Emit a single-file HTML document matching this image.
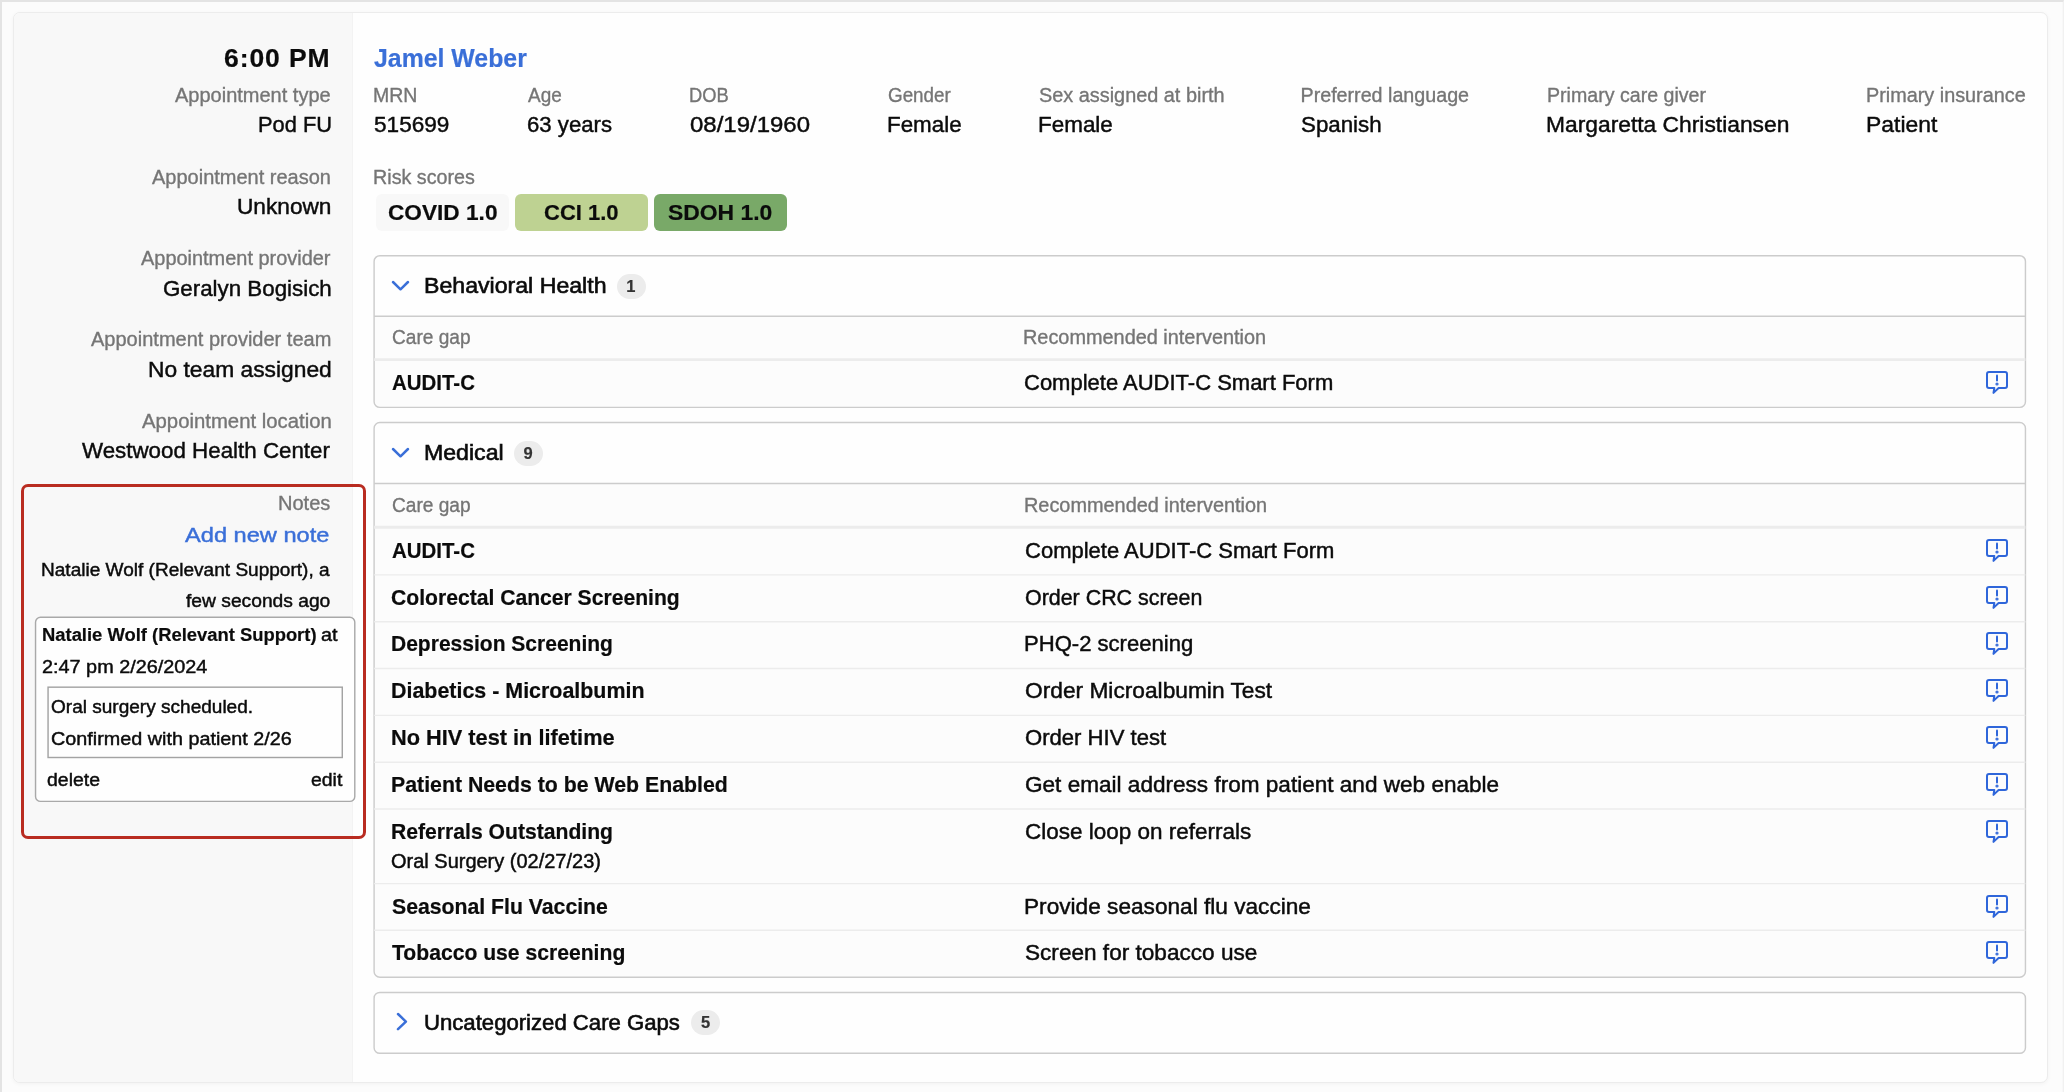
<!DOCTYPE html>
<html lang="en">
<head>
<meta charset="utf-8">
<title>Pre-visit planning – Jamel Weber</title>
<style>
html,body{margin:0;padding:0}
body{width:2064px;height:1092px;overflow:hidden;background:#fcfcfc;font-family:"Liberation Sans",sans-serif;color:#0b0b0b}
.page,.card,.side,.main,.fld,.demo,.risk,.badge,.panel,.phead,.pill,.tbl,.thead,.tr,.notes,.note,.ta,.t,.chev,.ico{position:absolute;box-sizing:border-box;margin:0;padding:0}
.page{border-top:2px solid #e4e4e4;border-left:2px solid #e4e4e4;border-right:1px solid #f1f1f1;box-shadow:inset -1px 0 0 #f8f8f8;background:#fcfcfc;overflow:hidden}
.card{background:#fefefe;border:1px solid #ececec;border-radius:7px;box-shadow:0 1px 4px rgba(0,0,0,.045)}
.side{background:#f8f8f8;border-radius:6px 0 0 6px;border-right:1px solid #f3f3f3}
.t{white-space:pre;transform-origin:0 0;font-weight:400;text-decoration:none;display:block;-webkit-text-stroke:.45px currentColor}
.t.lbl{-webkit-text-stroke-width:.35px}
.t.b{font-weight:700;-webkit-text-stroke-width:.2px}
.page{will-change:transform}
.badge{border-radius:6px}
.panel{border-radius:6px;background:#fefefe}
.lines{position:absolute;overflow:visible}
.pill{background:#ececec;border-radius:13px}
.tbl{background:#fcfcfc;border-radius:0 0 6px 6px}
.notes{border:3px solid #b92c21;border-radius:7px}
.note{background:#fefefe;border-radius:6px}
.ta{background:#fefefe}
</style>
</head>
<body>
<div class="page" style="left:0px;top:0px;width:2064px;height:1092px;">
 <div class="card" style="left:11px;top:10px;width:2035px;height:1071px;">
  <aside class="side" style="left:0px;top:0px;width:339px;height:1069px;">
   <span class="t time b" style="left:210.43px;top:28px;font-size:25.8px;line-height:34px;transform:scaleX(1.0269);letter-spacing:0.9px;">6:00 PM</span>
   <div class="fld" style="left:0px;top:69px;width:339px;height:56px;">
    <span class="t lbl" style="left:161.05px;top:0px;font-size:19.7px;line-height:26px;color:#757575;transform:scaleX(1.0157);">Appointment type</span>
    <span class="t val" style="left:243.73px;top:27px;font-size:22.9px;line-height:30px;transform:scaleX(0.9535);">Pod FU</span>
   </div>
   <div class="fld" style="left:0px;top:151px;width:339px;height:56px;">
    <span class="t lbl" style="left:138.25px;top:0px;font-size:19.7px;line-height:26px;color:#757575;transform:scaleX(1.0154);">Appointment reason</span>
    <span class="t val" style="left:222.92px;top:27px;font-size:22.9px;line-height:30px;transform:scaleX(0.9898);">Unknown</span>
   </div>
   <div class="fld" style="left:0px;top:232px;width:339px;height:56px;">
    <span class="t lbl" style="left:126.85px;top:0px;font-size:19.7px;line-height:26px;color:#757575;transform:scaleX(1.0126);">Appointment provider</span>
    <span class="t val" style="left:148.72px;top:28px;font-size:22.9px;line-height:30px;transform:scaleX(0.9751);">Geralyn Bogisich</span>
   </div>
   <div class="fld" style="left:0px;top:313px;width:339px;height:56px;">
    <span class="t lbl" style="left:76.75px;top:0px;font-size:19.7px;line-height:26px;color:#757575;transform:scaleX(1.0168);">Appointment provider team</span>
    <span class="t val" style="left:133.66px;top:28px;font-size:22.9px;line-height:30px;transform:scaleX(0.9961);">No team assigned</span>
   </div>
   <div class="fld" style="left:0px;top:395px;width:339px;height:56px;">
    <span class="t lbl" style="left:127.56px;top:0px;font-size:19.7px;line-height:26px;color:#757575;transform:scaleX(1.0322);">Appointment location</span>
    <span class="t val" style="left:68.3px;top:27px;font-size:22.9px;line-height:30px;transform:scaleX(0.9760);">Westwood Health Center</span>
   </div>
  </aside>
  <main class="main" style="left:339px;top:0px;width:1694px;height:1069px;">
   <a class="t name b" style="left:20.75px;top:29px;font-size:25.2px;line-height:33px;color:#3a6fd8;transform:scaleX(0.9864);">Jamel Weber</a>
   <div class="demo" style="left:21px;top:67px;width:1652px;height:60px;">
    <div class="fld" style="left:-0.4px;top:0px;width:76.2px;height:60px;">
     <span class="t lbl" style="left:-0.49px;top:2px;font-size:19.7px;line-height:26px;color:#757575;transform:scaleX(0.9905);">MRN</span>
     <span class="t val" style="left:0.66px;top:29px;font-size:22.9px;line-height:30px;transform:scaleX(0.9873);">515699</span>
    </div>
    <div class="fld" style="left:152.6px;top:0px;width:85.9px;height:60px;">
     <span class="t lbl" style="left:1.24px;top:2px;font-size:19.7px;line-height:26px;color:#757575;transform:scaleX(0.9640);">Age</span>
     <span class="t val" style="left:0.43px;top:29px;font-size:22.9px;line-height:30px;transform:scaleX(0.9681);">63 years</span>
    </div>
    <div class="fld" style="left:315.8px;top:0px;width:120.6px;height:60px;">
     <span class="t lbl" style="left:-0.39px;top:2px;font-size:19.7px;line-height:26px;color:#757575;transform:scaleX(0.9292);">DOB</span>
     <span class="t val" style="left:0.21px;top:29px;font-size:22.9px;line-height:30px;transform:scaleX(1.0472);">08/19/1960</span>
    </div>
    <div class="fld" style="left:513.4px;top:0px;width:74.3px;height:60px;">
     <span class="t lbl" style="left:0.28px;top:2px;font-size:19.7px;line-height:26px;color:#757575;transform:scaleX(0.9560);">Gender</span>
     <span class="t val" style="left:-0.51px;top:29px;font-size:22.9px;line-height:30px;transform:scaleX(0.9776);">Female</span>
    </div>
    <div class="fld" style="left:664.5px;top:0px;width:185.7px;height:60px;">
     <span class="t lbl" style="left:0.24px;top:2px;font-size:19.7px;line-height:26px;color:#757575;transform:scaleX(1.0093);">Sex assigned at birth</span>
     <span class="t val" style="left:-0.52px;top:29px;font-size:22.9px;line-height:30px;transform:scaleX(0.9803);">Female</span>
    </div>
    <div class="fld" style="left:927px;top:0px;width:168.3px;height:60px;">
     <span class="t lbl" style="left:-0.5px;top:2px;font-size:19.7px;line-height:26px;color:#757575;">Preferred language</span>
     <span class="t val" style="left:0.27px;top:29px;font-size:22.9px;line-height:30px;transform:scaleX(0.9746);">Spanish</span>
    </div>
    <div class="fld" style="left:1173px;top:0px;width:242.3px;height:60px;">
     <span class="t lbl" style="left:-0.49px;top:2px;font-size:19.7px;line-height:26px;color:#757575;transform:scaleX(0.9953);">Primary care giver</span>
     <span class="t val" style="left:-0.74px;top:29px;font-size:22.9px;line-height:30px;transform:scaleX(0.9961);">Margaretta Christiansen</span>
    </div>
    <div class="fld" style="left:1492.6px;top:0px;width:159.5px;height:60px;">
     <span class="t lbl" style="left:-0.51px;top:2px;font-size:19.7px;line-height:26px;color:#757575;transform:scaleX(1.0064);">Primary insurance</span>
     <span class="t val" style="left:-0.55px;top:29px;font-size:22.9px;line-height:30px;">Patient</span>
    </div>
   </div>
   <div class="risk" style="left:21px;top:149px;width:420px;height:72px;">
    <span class="t lbl" style="left:-0.9px;top:2px;font-size:19.7px;line-height:26px;color:#757575;">Risk scores</span>
    <span class="badge" style="left:2px;top:32px;width:133px;height:37.4px;background:#f8f8f8;">
     <span class="t b" style="left:12.21px;top:5px;font-size:21.4px;line-height:28px;transform:scaleX(1.0588);">COVID 1.0</span>
    </span>
    <span class="badge" style="left:140.6px;top:32px;width:133.6px;height:37.4px;background:#bed292;">
     <span class="t b" style="left:29.63px;top:5px;font-size:21.4px;line-height:28px;transform:scaleX(1.0282);">CCI 1.0</span>
    </span>
    <span class="badge" style="left:279.9px;top:32px;width:132.9px;height:37.4px;background:#79a968;">
     <span class="t b" style="left:13.76px;top:5px;font-size:21.4px;line-height:28px;transform:scaleX(1.0701);">SDOH 1.0</span>
    </span>
   </div>
   <section class="panel" style="left:21px;top:242px;width:1652px;height:153px;">
    <header class="phead" style="left:0px;top:0px;width:1652px;height:61px;">
     <svg class="chev" style="left:17.4px;top:25.4px" width="19" height="12" viewBox="0 0 19 12"><path d="M2 2 L9.5 9.3 L17 2" fill="none" stroke="#3a6fd8" stroke-width="2.5" stroke-linecap="round" stroke-linejoin="round"/></svg>
     <h2 class="t ptitle" style="left:49.69px;top:17px;font-size:21.6px;line-height:28px;transform:scaleX(1.0708);-webkit-text-stroke:0.6px currentColor;">Behavioral Health</h2>
     <span class="pill" style="left:243.2px;top:19px;width:28.7px;height:25px;">
      <span class="t b" style="left:9.15px;top:2px;font-size:16.5px;line-height:21px;color:#333;">1</span>
     </span>
    </header>
    <div class="tbl" style="left:0px;top:61px;width:1652px;height:92px;">
     <div class="thead" style="left:0px;top:0px;width:1652px;height:44px;">
      <span class="t lbl" style="left:17.67px;top:8px;font-size:19.7px;line-height:26px;color:#757575;transform:scaleX(0.9698);">Care gap</span>
      <span class="t lbl" style="left:648.79px;top:8px;font-size:19.7px;line-height:26px;color:#757575;transform:scaleX(1.0099);">Recommended intervention</span>
     </div>
     <div class="tr" style="left:0px;top:44px;width:1652px;height:48px;">
      <span class="t gap b" style="left:17.72px;top:9px;font-size:21.5px;line-height:28px;transform:scaleX(0.9507);">AUDIT-C</span>
      <span class="t rec" style="left:649.83px;top:9px;font-size:21.5px;line-height:28px;transform:scaleX(1.0231);">Complete AUDIT-C Smart Form</span>
      <svg class="ico" style="left:1611px;top:10px" width="24" height="24" viewBox="0 0 24 24" fill="none" stroke="#2f66da" stroke-width="2" stroke-linejoin="round" stroke-linecap="round"><path d="M4 2 H20 Q22 2 22 4 V16 Q22 18 20 18 H13.6 L8.5 22.9 L9.3 18 H4 Q2 18 2 16 V4 Q2 2 4 2 Z"/><path d="M12 5.5 V10.4"/><circle cx="12" cy="14" r="0.6" fill="#2f66da"/></svg>
     </div>
    </div>
    <svg class="lines" style="left:-2px;top:-2px" width="1656" height="157" viewBox="372 253 1656 157" fill="none"><rect x="374.1" y="255.7" width="1651.35" height="151.7" rx="5.7" fill="none" stroke="#cccccc" stroke-width="1.43"/><path d="M374.1 359.6H2025.45" stroke="#ececec" stroke-width="2.86"/><path d="M374.1 316.2H2025.45" stroke="#cccccc" stroke-width="1.43"/></svg>
   </section>
   <section class="panel" style="left:21px;top:409px;width:1652px;height:556px;">
    <header class="phead" style="left:0px;top:0px;width:1652px;height:62px;">
     <svg class="chev" style="left:17.4px;top:25.4px" width="19" height="12" viewBox="0 0 19 12"><path d="M2 2 L9.5 9.3 L17 2" fill="none" stroke="#3a6fd8" stroke-width="2.5" stroke-linecap="round" stroke-linejoin="round"/></svg>
     <h2 class="t ptitle" style="left:49.69px;top:17px;font-size:21.6px;line-height:28px;transform:scaleX(1.0704);-webkit-text-stroke:0.6px currentColor;">Medical</h2>
     <span class="pill" style="left:140px;top:19px;width:28.6px;height:25px;">
      <span class="t b" style="left:9.6px;top:2px;font-size:16.5px;line-height:21px;color:#333;">9</span>
     </span>
    </header>
    <div class="tbl" style="left:0px;top:62px;width:1652px;height:494px;">
     <div class="thead" style="left:0px;top:0px;width:1652px;height:43px;">
      <span class="t lbl" style="left:17.67px;top:8px;font-size:19.7px;line-height:26px;color:#757575;transform:scaleX(0.9698);">Care gap</span>
      <span class="t lbl" style="left:649.89px;top:8px;font-size:19.7px;line-height:26px;color:#757575;transform:scaleX(1.0099);">Recommended intervention</span>
     </div>
     <div class="tr" style="left:0px;top:43px;width:1652px;height:48px;">
      <span class="t gap b" style="left:17.72px;top:10px;font-size:21.5px;line-height:28px;transform:scaleX(0.9507);">AUDIT-C</span>
      <span class="t rec" style="left:650.93px;top:10px;font-size:21.5px;line-height:28px;transform:scaleX(1.0235);">Complete AUDIT-C Smart Form</span>
      <svg class="ico" style="left:1611px;top:11px" width="24" height="24" viewBox="0 0 24 24" fill="none" stroke="#2f66da" stroke-width="2" stroke-linejoin="round" stroke-linecap="round"><path d="M4 2 H20 Q22 2 22 4 V16 Q22 18 20 18 H13.6 L8.5 22.9 L9.3 18 H4 Q2 18 2 16 V4 Q2 2 4 2 Z"/><path d="M12 5.5 V10.4"/><circle cx="12" cy="14" r="0.6" fill="#2f66da"/></svg>
     </div>
     <div class="tr" style="left:0px;top:91px;width:1652px;height:47px;">
      <span class="t gap b" style="left:17.46px;top:9px;font-size:21.5px;line-height:28px;transform:scaleX(0.9823);">Colorectal Cancer Screening</span>
      <span class="t rec" style="left:650.95px;top:9px;font-size:21.5px;line-height:28px;transform:scaleX(0.9960);">Order CRC screen</span>
      <svg class="ico" style="left:1611px;top:10px" width="24" height="24" viewBox="0 0 24 24" fill="none" stroke="#2f66da" stroke-width="2" stroke-linejoin="round" stroke-linecap="round"><path d="M4 2 H20 Q22 2 22 4 V16 Q22 18 20 18 H13.6 L8.5 22.9 L9.3 18 H4 Q2 18 2 16 V4 Q2 2 4 2 Z"/><path d="M12 5.5 V10.4"/><circle cx="12" cy="14" r="0.6" fill="#2f66da"/></svg>
     </div>
     <div class="tr" style="left:0px;top:138px;width:1652px;height:46px;">
      <span class="t gap b" style="left:16.98px;top:8px;font-size:21.5px;line-height:28px;transform:scaleX(0.9777);">Depression Screening</span>
      <span class="t rec" style="left:650.16px;top:8px;font-size:21.5px;line-height:28px;transform:scaleX(1.0262);">PHQ-2 screening</span>
      <svg class="ico" style="left:1611px;top:9px" width="24" height="24" viewBox="0 0 24 24" fill="none" stroke="#2f66da" stroke-width="2" stroke-linejoin="round" stroke-linecap="round"><path d="M4 2 H20 Q22 2 22 4 V16 Q22 18 20 18 H13.6 L8.5 22.9 L9.3 18 H4 Q2 18 2 16 V4 Q2 2 4 2 Z"/><path d="M12 5.5 V10.4"/><circle cx="12" cy="14" r="0.6" fill="#2f66da"/></svg>
     </div>
     <div class="tr" style="left:0px;top:184px;width:1652px;height:47px;">
      <span class="t gap b" style="left:16.95px;top:9px;font-size:21.5px;line-height:28px;transform:scaleX(0.9964);">Diabetics - Microalbumin</span>
      <span class="t rec" style="left:650.91px;top:9px;font-size:21.5px;line-height:28px;transform:scaleX(1.0571);">Order Microalbumin Test</span>
      <svg class="ico" style="left:1611px;top:10px" width="24" height="24" viewBox="0 0 24 24" fill="none" stroke="#2f66da" stroke-width="2" stroke-linejoin="round" stroke-linecap="round"><path d="M4 2 H20 Q22 2 22 4 V16 Q22 18 20 18 H13.6 L8.5 22.9 L9.3 18 H4 Q2 18 2 16 V4 Q2 2 4 2 Z"/><path d="M12 5.5 V10.4"/><circle cx="12" cy="14" r="0.6" fill="#2f66da"/></svg>
     </div>
     <div class="tr" style="left:0px;top:231px;width:1652px;height:47px;">
      <span class="t gap b" style="left:16.94px;top:9px;font-size:21.5px;line-height:28px;transform:scaleX(1.0116);">No HIV test in lifetime</span>
      <span class="t rec" style="left:650.93px;top:9px;font-size:21.5px;line-height:28px;transform:scaleX(1.0274);">Order HIV test</span>
      <svg class="ico" style="left:1611px;top:10px" width="24" height="24" viewBox="0 0 24 24" fill="none" stroke="#2f66da" stroke-width="2" stroke-linejoin="round" stroke-linecap="round"><path d="M4 2 H20 Q22 2 22 4 V16 Q22 18 20 18 H13.6 L8.5 22.9 L9.3 18 H4 Q2 18 2 16 V4 Q2 2 4 2 Z"/><path d="M12 5.5 V10.4"/><circle cx="12" cy="14" r="0.6" fill="#2f66da"/></svg>
     </div>
     <div class="tr" style="left:0px;top:278px;width:1652px;height:47px;">
      <span class="t gap b" style="left:16.96px;top:9px;font-size:21.5px;line-height:28px;transform:scaleX(0.9902);">Patient Needs to be Web Enabled</span>
      <span class="t rec" style="left:650.91px;top:9px;font-size:21.5px;line-height:28px;transform:scaleX(1.0496);">Get email address from patient and web enable</span>
      <svg class="ico" style="left:1611px;top:10px" width="24" height="24" viewBox="0 0 24 24" fill="none" stroke="#2f66da" stroke-width="2" stroke-linejoin="round" stroke-linecap="round"><path d="M4 2 H20 Q22 2 22 4 V16 Q22 18 20 18 H13.6 L8.5 22.9 L9.3 18 H4 Q2 18 2 16 V4 Q2 2 4 2 Z"/><path d="M12 5.5 V10.4"/><circle cx="12" cy="14" r="0.6" fill="#2f66da"/></svg>
     </div>
     <div class="tr" style="left:0px;top:325px;width:1652px;height:75px;">
      <span class="t gap b" style="left:16.97px;top:9px;font-size:21.5px;line-height:28px;transform:scaleX(0.9832);">Referrals Outstanding</span>
      <span class="t sub" style="left:17.44px;top:40px;font-size:19.6px;line-height:25px;transform:scaleX(1.0198);">Oral Surgery (02/27/23)</span>
      <span class="t rec" style="left:650.92px;top:9px;font-size:21.5px;line-height:28px;transform:scaleX(1.0460);">Close loop on referrals</span>
      <svg class="ico" style="left:1611px;top:10px" width="24" height="24" viewBox="0 0 24 24" fill="none" stroke="#2f66da" stroke-width="2" stroke-linejoin="round" stroke-linecap="round"><path d="M4 2 H20 Q22 2 22 4 V16 Q22 18 20 18 H13.6 L8.5 22.9 L9.3 18 H4 Q2 18 2 16 V4 Q2 2 4 2 Z"/><path d="M12 5.5 V10.4"/><circle cx="12" cy="14" r="0.6" fill="#2f66da"/></svg>
     </div>
     <div class="tr" style="left:0px;top:400px;width:1652px;height:46px;">
      <span class="t gap b" style="left:17.71px;top:9px;font-size:21.5px;line-height:28px;transform:scaleX(0.9871);">Seasonal Flu Vaccine</span>
      <span class="t rec" style="left:650.12px;top:9px;font-size:21.5px;line-height:28px;transform:scaleX(1.0531);">Provide seasonal flu vaccine</span>
      <svg class="ico" style="left:1611px;top:10px" width="24" height="24" viewBox="0 0 24 24" fill="none" stroke="#2f66da" stroke-width="2" stroke-linejoin="round" stroke-linecap="round"><path d="M4 2 H20 Q22 2 22 4 V16 Q22 18 20 18 H13.6 L8.5 22.9 L9.3 18 H4 Q2 18 2 16 V4 Q2 2 4 2 Z"/><path d="M12 5.5 V10.4"/><circle cx="12" cy="14" r="0.6" fill="#2f66da"/></svg>
     </div>
     <div class="tr" style="left:0px;top:446px;width:1652px;height:48px;">
      <span class="t gap b" style="left:17.95px;top:9px;font-size:21.5px;line-height:28px;transform:scaleX(0.9828);">Tobacco use screening</span>
      <span class="t rec" style="left:650.91px;top:9px;font-size:21.5px;line-height:28px;transform:scaleX(1.0510);">Screen for tobacco use</span>
      <svg class="ico" style="left:1611px;top:10px" width="24" height="24" viewBox="0 0 24 24" fill="none" stroke="#2f66da" stroke-width="2" stroke-linejoin="round" stroke-linecap="round"><path d="M4 2 H20 Q22 2 22 4 V16 Q22 18 20 18 H13.6 L8.5 22.9 L9.3 18 H4 Q2 18 2 16 V4 Q2 2 4 2 Z"/><path d="M12 5.5 V10.4"/><circle cx="12" cy="14" r="0.6" fill="#2f66da"/></svg>
     </div>
    </div>
    <svg class="lines" style="left:-2px;top:-2px" width="1656" height="560" viewBox="372 420 1656 560" fill="none"><rect x="374.1" y="422.5" width="1651.35" height="554.76" rx="5.7" fill="none" stroke="#cccccc" stroke-width="1.43"/><path d="M374.1 527.25H2025.45" stroke="#ececec" stroke-width="2.86"/><path d="M374.1 574.9H2025.45" stroke="#ececec" stroke-width="1.43"/><path d="M374.1 621.7H2025.45" stroke="#ececec" stroke-width="1.43"/><path d="M374.1 668.5H2025.45" stroke="#ececec" stroke-width="1.43"/><path d="M374.1 715.4H2025.45" stroke="#ececec" stroke-width="1.43"/><path d="M374.1 762.2H2025.45" stroke="#ececec" stroke-width="1.43"/><path d="M374.1 809.0H2025.45" stroke="#ececec" stroke-width="1.43"/><path d="M374.1 883.6H2025.45" stroke="#ececec" stroke-width="1.43"/><path d="M374.1 930.3H2025.45" stroke="#ececec" stroke-width="1.43"/><path d="M374.1 483.54H2025.45" stroke="#cccccc" stroke-width="1.43"/></svg>
   </section>
   <section class="panel" style="left:21px;top:979px;width:1652px;height:62px;">
    <header class="phead" style="left:0px;top:0px;width:1652px;height:62px;">
     <svg class="chev" style="left:21.6px;top:19.6px" width="13" height="20" viewBox="0 0 13 20"><path d="M2 2 L9.9 9.6 L2 17.2" fill="none" stroke="#3a6fd8" stroke-width="2.5" stroke-linecap="round" stroke-linejoin="round"/></svg>
     <h2 class="t ptitle" style="left:50.02px;top:17px;font-size:21.6px;line-height:28px;transform:scaleX(1.0250);-webkit-text-stroke:0.6px currentColor;">Uncategorized Care Gaps</h2>
     <span class="pill" style="left:316.7px;top:18px;width:29.8px;height:25px;">
      <span class="t b" style="left:10.2px;top:2px;font-size:16.5px;line-height:21px;color:#333;">5</span>
     </span>
    </header>
    <svg class="lines" style="left:-2px;top:-2px" width="1656" height="66" viewBox="372 990 1656 66" fill="none"><rect x="374.1" y="992.44" width="1651.35" height="60.89" rx="5.7" fill="none" stroke="#cccccc" stroke-width="1.43"/></svg>
   </section>
  </main>
 </div>
 <div class="notes" style="left:19px;top:482px;width:345px;height:355px;">
  <span class="t lbl" style="left:254.07px;top:3px;font-size:19.7px;line-height:26px;color:#757575;transform:scaleX(1.0182);">Notes</span>
  <a class="t addnote" style="left:160.68px;top:34px;font-size:20.9px;line-height:27px;color:#3a6fd8;transform:scaleX(1.1301);-webkit-text-stroke:0.45px currentColor;">Add new note</a>
  <span class="t" style="left:17.13px;top:71px;font-size:18.7px;line-height:24px;transform:scaleX(1.0190);">Natalie Wolf (Relevant Support), a</span>
  <span class="t" style="left:162.2px;top:102px;font-size:18.7px;line-height:24px;transform:scaleX(1.0290);">few seconds ago</span>
  <div class="note" style="left:11px;top:130px;width:320px;height:185px;">
   <span class="t b" style="left:6.57px;top:6px;font-size:18.7px;line-height:24px;transform:scaleX(0.9841);">Natalie Wolf (Relevant Support)</span>
   <span class="t" style="left:285.67px;top:6px;font-size:18.7px;line-height:24px;transform:scaleX(1.0623);">at</span>
   <span class="t" style="left:7px;top:38px;font-size:18.7px;line-height:24px;transform:scaleX(1.0613);">2:47 pm 2/26/2024</span>
   <div class="ta" style="left:13px;top:70px;width:294px;height:71px;">
    <span class="t" style="left:3.04px;top:8px;font-size:18.7px;line-height:24px;transform:scaleX(1.0186);">Oral surgery scheduled.</span>
    <span class="t" style="left:3.01px;top:40px;font-size:18.7px;line-height:24px;transform:scaleX(1.0586);">Confirmed with patient 2/26</span>
   </div>
   <span class="t" style="left:12.38px;top:151px;font-size:18.7px;line-height:24px;transform:scaleX(1.0412);">delete</span>
   <span class="t" style="left:276.08px;top:151px;font-size:18.7px;line-height:24px;transform:scaleX(1.0387);">edit</span>
   <svg class="lines" style="left:-3px;top:-3px" width="326" height="191" viewBox="32 614 326 191" fill="none"><rect x="35.54" y="617.26" width="319.26" height="184.14" rx="5" stroke="#a9a9a9" stroke-width="1.43"/><rect x="48.06" y="687.17" width="294.22" height="70.33" stroke="#a3a3a3" stroke-width="1.43"/></svg>
  </div>
 </div>
</div>
</body>
</html>
